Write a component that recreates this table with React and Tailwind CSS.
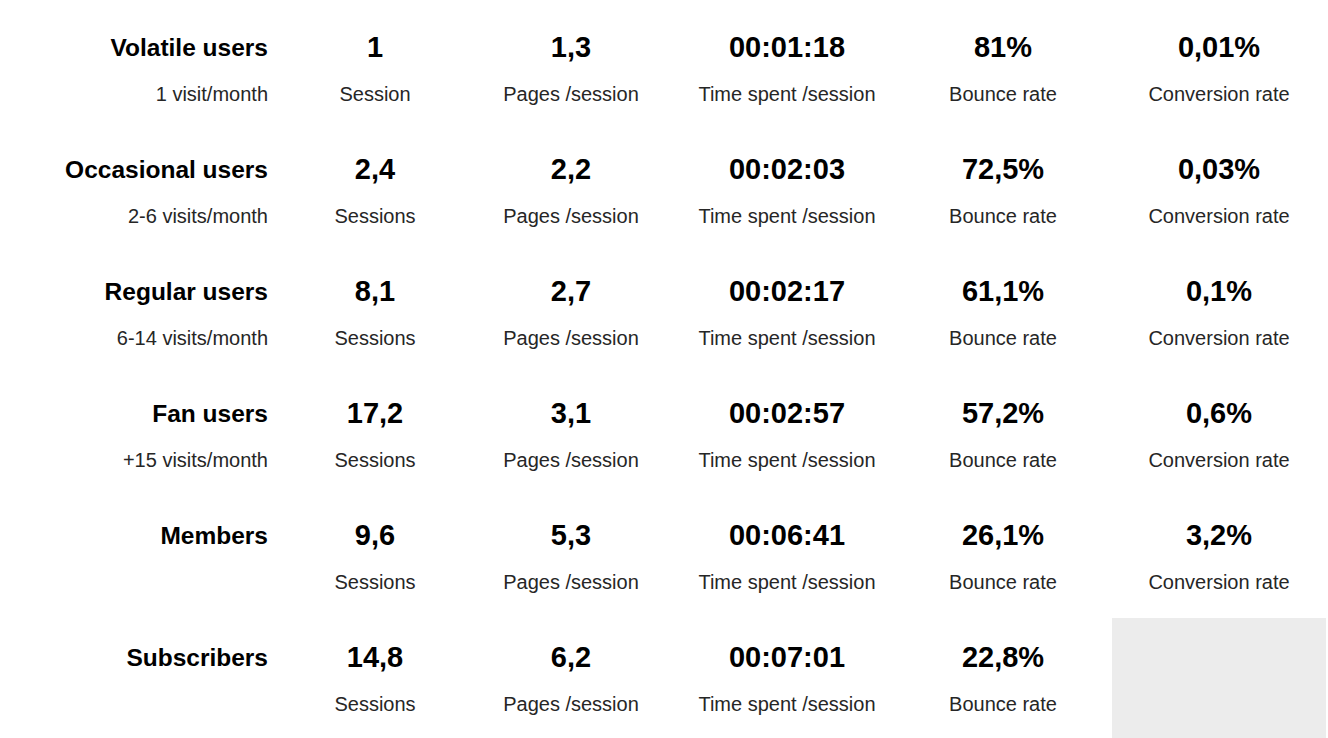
const rows = [
  { title: "Volatile users", sub: "1 visit/month", values: ["1", "1,3", "00:01:18", "81%", "0,01%"], first: "Session" },
  { title: "Occasional users", sub: "2-6 visits/month", values: ["2,4", "2,2", "00:02:03", "72,5%", "0,03%"] },
  { title: "Regular users", sub: "6-14 visits/month", values: ["8,1", "2,7", "00:02:17", "61,1%", "0,1%"] },
  { title: "Fan users", sub: "+15 visits/month", values: ["17,2", "3,1", "00:02:57", "57,2%", "0,6%"] },
  { title: "Members", sub: "", values: ["9,6", "5,3", "00:06:41", "26,1%", "3,2%"] },
  { title: "Subscribers", sub: "", values: ["14,8", "6,2", "00:07:01", "22,8%", null] },
];

const labels = ["Sessions", "Pages /session", "Time spent /session", "Bounce rate", "Conversion rate"];

function StatCell({ value, label }) {
  if (value === null) {
    return <div className="h-[120px] bg-[#ececec]" />;
  }
  return (
    <div className="h-[120px] flex flex-col items-center pt-[23px]">
      <div className="text-[29px] leading-[33px] font-bold text-black">{value}</div>
      <div className="mt-[18px] text-[20px] leading-[24px] text-[#262626]">{label}</div>
    </div>
  );
}

export default function App() {
  return (
    <div
      className="min-h-screen bg-white pt-[8px]"
      style={{ fontFamily: '"Liberation Sans", Arial, sans-serif' }}
    >
      <div className="grid grid-cols-[286px_174px_214px_214px_214px_214px] gap-x-[2px] gap-y-[2px]">
        {rows.map((row) => (
          <div key={row.title} className="contents">
            <div className="h-[120px] flex flex-col items-end pt-[23px] pr-[18px]">
              <div className="text-[24.5px] leading-[33px] font-bold text-black">{row.title}</div>
              {row.sub && (
                <div className="mt-[18px] text-[20px] leading-[24px] text-[#262626]">{row.sub}</div>
              )}
            </div>
            {row.values.map((v, j) => (
              <StatCell
                key={j}
                value={v}
                label={j === 0 && row.first ? row.first : labels[j]}
              />
            ))}
          </div>
        ))}
      </div>
    </div>
  );
}
